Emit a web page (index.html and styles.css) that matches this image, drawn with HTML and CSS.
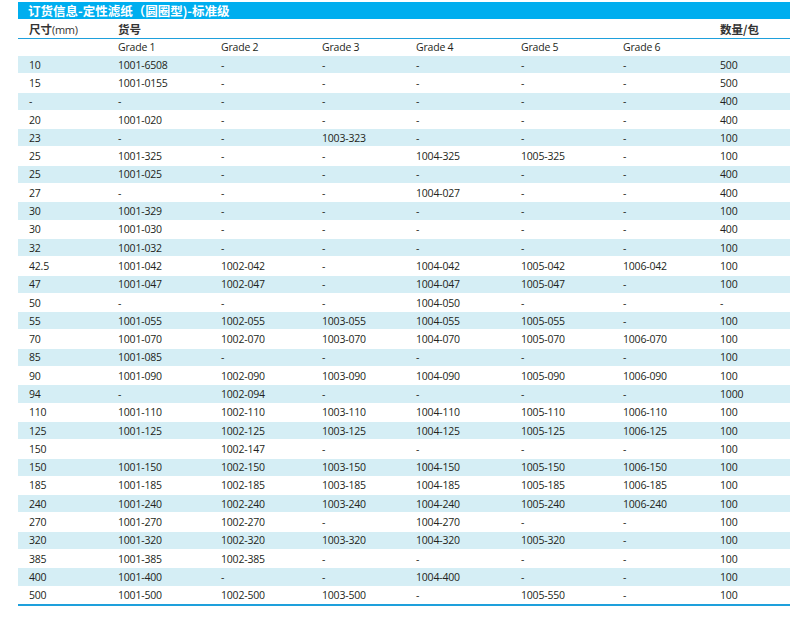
FILE: index.html
```html
<!DOCTYPE html>
<html lang="zh">
<head>
<meta charset="utf-8">
<title>订货信息-定性滤纸（圆圈型)-标准级</title>
<link rel="stylesheet" href="styles.css">
</head>
<body>
<div class="wrap">
  <div class="title">订货信息-定性滤纸（圆圈型)-标准级</div>
  <table class="grid">
    <colgroup>
      <col class="c1"><col class="c2"><col class="c3"><col class="c4"><col class="c5"><col class="c6"><col class="c7"><col class="c8">
    </colgroup>
    <thead>
      <tr class="head">
        <th>尺寸<span class="unit">(mm)</span></th><th colspan="6">货号</th><th>数量/包</th>
      </tr>
      <tr class="grades">
        <td></td><td>Grade 1</td><td>Grade 2</td><td>Grade 3</td><td>Grade 4</td><td>Grade 5</td><td>Grade 6</td><td></td>
      </tr>
    </thead>
    <tbody>
      <tr><td>10</td><td>1001-6508</td><td>-</td><td>-</td><td>-</td><td>-</td><td>-</td><td>500</td></tr>
      <tr><td>15</td><td>1001-0155</td><td>-</td><td>-</td><td>-</td><td>-</td><td>-</td><td>500</td></tr>
      <tr><td>-</td><td>-</td><td>-</td><td>-</td><td>-</td><td>-</td><td>-</td><td>400</td></tr>
      <tr><td>20</td><td>1001-020</td><td>-</td><td>-</td><td>-</td><td>-</td><td>-</td><td>400</td></tr>
      <tr><td>23</td><td>-</td><td>-</td><td>1003-323</td><td>-</td><td>-</td><td>-</td><td>100</td></tr>
      <tr><td>25</td><td>1001-325</td><td>-</td><td>-</td><td>1004-325</td><td>1005-325</td><td>-</td><td>100</td></tr>
      <tr><td>25</td><td>1001-025</td><td>-</td><td>-</td><td>-</td><td>-</td><td>-</td><td>400</td></tr>
      <tr><td>27</td><td>-</td><td>-</td><td>-</td><td>1004-027</td><td>-</td><td>-</td><td>400</td></tr>
      <tr><td>30</td><td>1001-329</td><td>-</td><td>-</td><td>-</td><td>-</td><td>-</td><td>100</td></tr>
      <tr><td>30</td><td>1001-030</td><td>-</td><td>-</td><td>-</td><td>-</td><td>-</td><td>400</td></tr>
      <tr><td>32</td><td>1001-032</td><td>-</td><td>-</td><td>-</td><td>-</td><td>-</td><td>100</td></tr>
      <tr><td>42.5</td><td>1001-042</td><td>1002-042</td><td>-</td><td>1004-042</td><td>1005-042</td><td>1006-042</td><td>100</td></tr>
      <tr><td>47</td><td>1001-047</td><td>1002-047</td><td>-</td><td>1004-047</td><td>1005-047</td><td>-</td><td>100</td></tr>
      <tr><td>50</td><td>-</td><td>-</td><td>-</td><td>1004-050</td><td>-</td><td>-</td><td>-</td></tr>
      <tr><td>55</td><td>1001-055</td><td>1002-055</td><td>1003-055</td><td>1004-055</td><td>1005-055</td><td>-</td><td>100</td></tr>
      <tr><td>70</td><td>1001-070</td><td>1002-070</td><td>1003-070</td><td>1004-070</td><td>1005-070</td><td>1006-070</td><td>100</td></tr>
      <tr><td>85</td><td>1001-085</td><td>-</td><td>-</td><td>-</td><td>-</td><td>-</td><td>100</td></tr>
      <tr><td>90</td><td>1001-090</td><td>1002-090</td><td>1003-090</td><td>1004-090</td><td>1005-090</td><td>1006-090</td><td>100</td></tr>
      <tr><td>94</td><td>-</td><td>1002-094</td><td>-</td><td>-</td><td>-</td><td>-</td><td>1000</td></tr>
      <tr><td>110</td><td>1001-110</td><td>1002-110</td><td>1003-110</td><td>1004-110</td><td>1005-110</td><td>1006-110</td><td>100</td></tr>
      <tr><td>125</td><td>1001-125</td><td>1002-125</td><td>1003-125</td><td>1004-125</td><td>1005-125</td><td>1006-125</td><td>100</td></tr>
      <tr><td>150</td><td></td><td>1002-147</td><td>-</td><td>-</td><td>-</td><td>-</td><td>100</td></tr>
      <tr><td>150</td><td>1001-150</td><td>1002-150</td><td>1003-150</td><td>1004-150</td><td>1005-150</td><td>1006-150</td><td>100</td></tr>
      <tr><td>185</td><td>1001-185</td><td>1002-185</td><td>1003-185</td><td>1004-185</td><td>1005-185</td><td>1006-185</td><td>100</td></tr>
      <tr><td>240</td><td>1001-240</td><td>1002-240</td><td>1003-240</td><td>1004-240</td><td>1005-240</td><td>1006-240</td><td>100</td></tr>
      <tr><td>270</td><td>1001-270</td><td>1002-270</td><td>-</td><td>1004-270</td><td>-</td><td>-</td><td>100</td></tr>
      <tr><td>320</td><td>1001-320</td><td>1002-320</td><td>1003-320</td><td>1004-320</td><td>1005-320</td><td>-</td><td>100</td></tr>
      <tr><td>385</td><td>1001-385</td><td>1002-385</td><td>-</td><td>-</td><td>-</td><td>-</td><td>100</td></tr>
      <tr><td>400</td><td>1001-400</td><td>-</td><td>-</td><td>1004-400</td><td>-</td><td>-</td><td>100</td></tr>
      <tr><td>500</td><td>1001-500</td><td>1002-500</td><td>1003-500</td><td>-</td><td>1005-550</td><td>-</td><td>100</td></tr>
    </tbody>
  </table>
</div>
</body>
</html>
```

FILE: styles.css
```css
html, body {
  margin: 0;
  padding: 0;
  background: #ffffff;
}

.wrap {
  margin: 2px 0 0 18px;
  width: 772px;
}

.title {
  height: 17px;
  line-height: 17px;
  background: #00aeef;
  color: #ffffff;
  font-family: "Noto Sans CJK SC", "Noto Sans", sans-serif;
  font-weight: 700;
  font-size: 12.5px;
  padding-left: 10px;
  white-space: nowrap;
}

.grid {
  width: 772px;
  border-collapse: collapse;
  table-layout: fixed;
  font-family: "Open Sans", "Noto Sans CJK SC", sans-serif;
  font-size: 10.5px;
  letter-spacing: -0.2px;
  color: #231f20;
}

.c1 { width: 89px; }
.c2 { width: 103px; }
.c3 { width: 101px; }
.c4 { width: 94px; }
.c5 { width: 105px; }
.c6 { width: 102px; }
.c7 { width: 97px; }
.c8 { width: 81px; }

.grid th,
.grid td {
  padding: 0 0 0 11px;
  text-align: left;
  white-space: nowrap;
  vertical-align: middle;
}

.head th {
  height: 18px;
  padding-top: 1px;
  font-family: "Noto Sans CJK SC", sans-serif;
  font-size: 11.5px;
  font-weight: 700;
  color: #333333;
  letter-spacing: 0;
  border-bottom: 1.5px solid #1ea0dc;
}

.head .unit {
  font-family: "Open Sans", sans-serif;
  font-weight: 400;
  font-size: 11px;
  letter-spacing: -0.3px;
}

.grades td {
  height: 16px;
}

.grid tbody td {
  height: 17.3px;
  border-top: 1px solid #ffffff;
}

.grid tbody tr:nth-child(odd) td {
  background: #d5eef5;
}

.grid tbody tr:last-child td {
  border-bottom: 2px solid #1ea0dc;
}
```
